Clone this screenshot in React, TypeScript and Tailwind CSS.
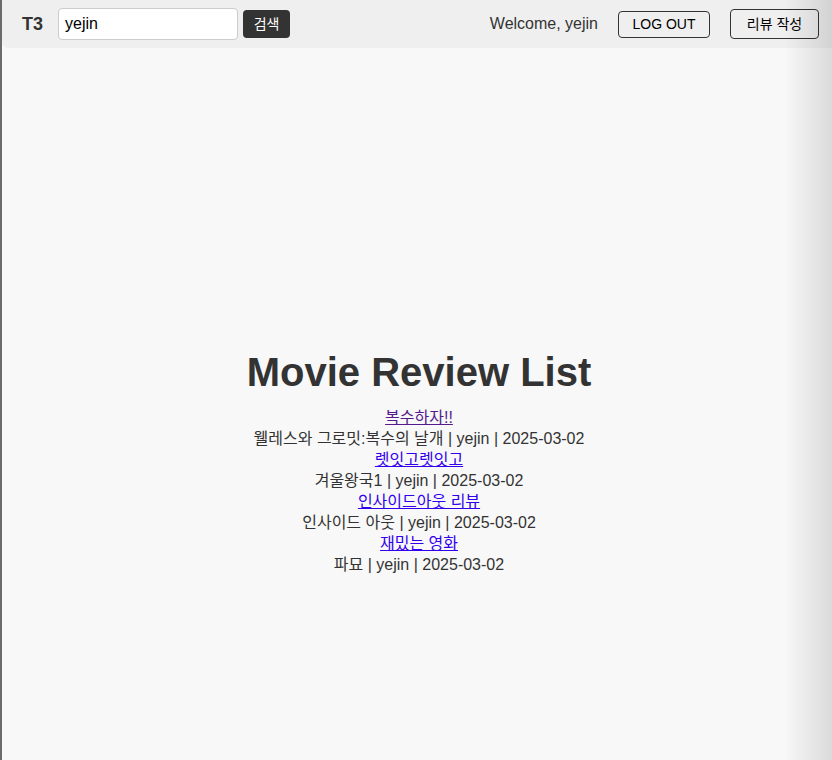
export default function App() {
  const reviews = [
    { title: '복수하자!!', movie: '웰레스와 그로밋:복수의 날개', visited: true },
    { title: '렛잇고렛잇고', movie: '겨울왕국1', visited: false },
    { title: '인사이드아웃 리뷰', movie: '인사이드 아웃', visited: false },
    { title: '재밌는 영화', movie: '파묘', visited: false },
  ];

  return (
    <div className="relative flex h-[760px] w-[832px] flex-col overflow-hidden border-l-2 border-[#6b6b6b] bg-[#f8f8f8] font-['Liberation_Sans','Noto_Sans_CJK_KR',sans-serif] text-[#333]">
      <header className="flex h-12 items-center rounded-bl-md bg-[#efefef] pl-5 pr-[13px]">
        <span className="text-lg font-bold text-[#333]">T3</span>
        <input
          defaultValue="yejin"
          className="ml-[15px] h-8 w-[180px] rounded border border-[#ccc] bg-white px-1.5 text-base text-black outline-none"
        />
        <button className="ml-[5px] h-7 w-[47px] rounded bg-[#333] text-sm text-white">검색</button>
        <span className="ml-auto text-base text-[#333]">Welcome, yejin</span>
        <button className="ml-5 h-[27px] w-[92px] rounded border border-[#333] text-sm text-black">LOG OUT</button>
        <button className="ml-5 h-[30px] w-[89px] rounded border border-[#333] text-sm text-black">리뷰 작성</button>
      </header>

      <main className="flex flex-1 flex-col items-center pl-1 pt-[301px] text-center">
        <h1 className="text-[40px] font-bold leading-[46px] text-[#333]">Movie Review List</h1>
        <ul className="mt-3 text-base leading-[21px]">
          {reviews.map((r, i) => (
            <li key={i}>
              <a href="#" className={`underline ${r.visited ? 'text-[#551a8b]' : 'text-[#3300ee]'}`}>
                {r.title}
              </a>
              <div>
                {r.movie} | yejin | 2025-03-02
              </div>
            </li>
          ))}
        </ul>
      </main>

      <div className="pointer-events-none absolute right-0 top-0 h-full w-[48px] bg-gradient-to-r from-transparent to-black/12" />
    </div>
  );
}
